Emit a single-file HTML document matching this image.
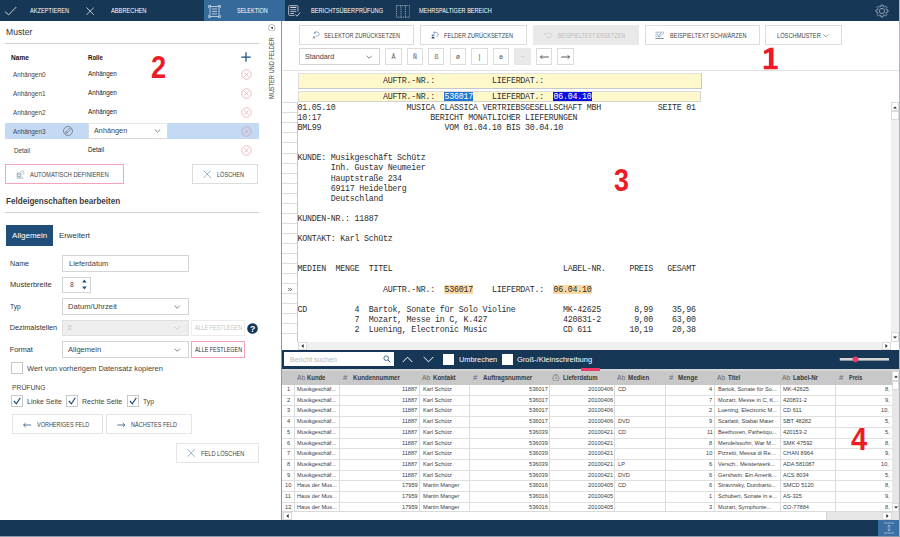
<!DOCTYPE html>
<html><head><meta charset="utf-8">
<style>
*{box-sizing:border-box;margin:0;padding:0}
html,body{width:900px;height:537px;overflow:hidden;background:#fff}
body{font-family:"Liberation Sans",sans-serif;position:relative;color:#222}
.a{position:absolute}
.t{position:absolute;white-space:nowrap;line-height:1}
#topbar{left:0;top:0;width:900px;height:21px;background:#163755}
#seltab{left:204px;top:0;width:81px;height:21px;background:#356a9b}
.tb{color:#fff;font-size:6.2px;top:7.6px;letter-spacing:-0.1px}
#botbar{left:0;top:520px;width:900px;height:17px;background:#163755}
.btn{position:absolute;border:1px solid #dcdcdc;background:#fff}
.bt{color:#3a4a5c;font-size:6.2px;letter-spacing:-0.1px}
.lbl{font-size:7.2px;color:#333}
.inp{position:absolute;border:1px solid #d4d4d4;background:#fff}
.cb{position:absolute;width:12px;height:12px;border:1px solid #c8c8c8;background:#fff}
.mono{font-family:"Liberation Mono",monospace;font-size:8.3px;letter-spacing:-0.24px;white-space:pre;line-height:10.15px;color:#2e2e2e}
.rn{left:13.4px;font-size:6.4px;color:#444}
.rr{left:88.3px;font-size:6.4px;color:#222}
.del{fill:none;stroke:#df7f88;stroke-width:0.5}
.ck{fill:none;stroke:#1f4e79;stroke-width:1.2}
.sbb{background:#fff;border:1px solid #dadada}
.th{top:373.8px;font-size:6.4px;font-weight:bold;color:#333}
.td{font-size:5.9px;color:#333}
</style></head><body>
<!-- TOP BAR -->
<div class="a" id="topbar"></div>
<div class="a" id="seltab"></div>
<div id="top">
<div class="t" style="left:30.15px;top:7.00px;font-size:7.5px;color:#fff;transform:scaleX(0.750);transform-origin:0 0;">AKZEPTIEREN</div>
<div class="t" style="left:111.00px;top:7.00px;font-size:7.5px;color:#fff;transform:scaleX(0.760);transform-origin:0 0;">ABBRECHEN</div>
<div class="t" style="left:237.00px;top:7.00px;font-size:7.5px;color:#fff;transform:scaleX(0.731);transform-origin:0 0;">SELEKTION</div>
<div class="t" style="left:310.90px;top:7.00px;font-size:7.5px;color:#fff;transform:scaleX(0.752);transform-origin:0 0;">BERICHTSÜBERPRÜFUNG</div>
<div class="t" style="left:418.90px;top:7.00px;font-size:7.5px;color:#fff;transform:scaleX(0.739);transform-origin:0 0;">MEHRSPALTIGER BEREICH</div>
<svg class="a" style="left:4px;top:6px" width="14" height="10" viewBox="0 0 14 10"><path d="M1 5.7 L4.7 8.8 L12.3 1" fill="none" stroke="#fff" stroke-width="0.75"/></svg>
<svg class="a" style="left:85.8px;top:6.8px" width="8.4" height="8.4" viewBox="0 0 9 9"><path d="M0.5 0.5 L8.5 8.5 M8.5 0.5 L0.5 8.5" stroke="#fff" stroke-width="0.75"/></svg>
<svg class="a" style="left:207.5px;top:4.5px" width="13" height="13" viewBox="0 0 13 13"><g fill="none" stroke="#e4edf6" stroke-width="0.7"><path d="M0.6 3 V0.6 H3 M10 0.6 H12.4 V3 M12.4 10 V12.4 H10 M3 12.4 H0.6 V10"/><rect x="2" y="1.6" width="9" height="9.8"/><path d="M4 4 H9 M4 6.5 H9 M4 9 H9"/></g></svg>
<svg class="a" style="left:288.2px;top:4.5px" width="13" height="13" viewBox="0 0 13 13"><g fill="none" stroke="#dfe6ee" stroke-width="0.7"><path d="M6.5 10.4 H1.6 Q0.6 10.4 0.6 9.4 V1.6 Q0.6 0.6 1.6 0.6 H9 Q10 0.6 10 1.6 V6.5"/><path d="M2.3 2.4 H8.3" stroke-width="1.1"/><path d="M2.3 4.7 H8.3 M2.3 6.6 H8.3 M2.3 8.5 H6"/><path d="M7.3 9.5 L9 11.2 L12 7.6" stroke-width="0.8"/></g></svg>
<svg class="a" style="left:395.6px;top:4.5px" width="14.4" height="13" viewBox="0 0 14.4 13"><g fill="none" stroke="#e8edf3" stroke-width="0.7" stroke-dasharray="0.9 0.9"><rect x="0.6" y="0.6" width="13.2" height="11.6"/><path d="M5 0.6 V12.2 M9.4 0.6 V12.2"/></g></svg>
<svg class="a" style="left:874.9px;top:3.7px" width="14" height="14" viewBox="0 0 14 14"><g fill="none" stroke="#b9c6d4" stroke-width="0.7"><path d="M5.82 2.55 L5.97 0.99 L8.03 0.99 L8.18 2.55 L9.31 3.02 L10.52 2.02 L11.98 3.48 L10.98 4.69 L11.45 5.82 L13.01 5.97 L13.01 8.03 L11.45 8.18 L10.98 9.31 L11.98 10.52 L10.52 11.98 L9.31 10.98 L8.18 11.45 L8.03 13.01 L5.97 13.01 L5.82 11.45 L4.69 10.98 L3.48 11.98 L2.02 10.52 L3.02 9.31 L2.55 8.18 L0.99 8.03 L0.99 5.97 L2.55 5.82 L3.02 4.69 L2.02 3.48 L3.48 2.02 L4.69 3.02 Z"/><circle cx="7" cy="7" r="2.6"/></g></svg>
</div>
<!-- LEFT PANEL placeholder -->
<div id="left">
<div class="t" style="left:5.90px;top:28.00px;font-size:9.2px;color:#333;transform:scaleX(0.936);transform-origin:0 0;">Muster</div>
<div class="a" style="left:5px;top:43px;width:253.5px;height:1px;background:#cfcfcf"></div>
<div class="t" style="left:10.90px;top:55.00px;font-size:6.7px;color:#111;font-weight:bold;transform:scaleX(0.980);transform-origin:0 0;">Name</div>
<div class="t" style="left:88.30px;top:55.00px;font-size:6.7px;color:#111;font-weight:bold;transform:scaleX(0.910);transform-origin:0 0;">Rolle</div>
<div class="a" style="left:5px;top:123px;width:253.5px;height:16px;background:#c4daf4"></div>
<div class="a" style="left:88.3px;top:123px;width:79.8px;height:16px;background:#fff;border:1px solid #d9d9d9;border-top-color:#e8e8e8"></div>
<div class="t" style="left:93.80px;top:127.00px;font-size:7.5px;color:#444;transform:scaleX(0.971);transform-origin:0 0;">Anhängen</div>
<svg class="a" style="left:154.4px;top:129.4px" width="7" height="4" viewBox="0 0 7 4"><path d="M0.8 0.6 L3.5 3.2 L6.2 0.6" fill="none" stroke="#555" stroke-width="0.7"/></svg>
<div class="t" style="left:13.40px;top:72.00px;font-size:6.7px;color:#444;transform:scaleX(0.948);transform-origin:0 0;">Anhängen0</div>
<div class="t" style="left:13.40px;top:91.00px;font-size:6.7px;color:#444;transform:scaleX(0.948);transform-origin:0 0;">Anhängen1</div>
<div class="t" style="left:13.40px;top:110.00px;font-size:6.7px;color:#444;transform:scaleX(0.948);transform-origin:0 0;">Anhängen2</div>
<div class="t" style="left:13.40px;top:129.00px;font-size:6.7px;color:#444;transform:scaleX(0.948);transform-origin:0 0;">Anhängen3</div>
<div class="t" style="left:13.70px;top:148.00px;font-size:6.7px;color:#444;transform:scaleX(0.941);transform-origin:0 0;">Detail</div>
<div class="t" style="left:88.30px;top:71.00px;font-size:6.7px;color:#1a1a1a;transform:scaleX(0.946);transform-origin:0 0;">Anhängen</div>
<div class="t" style="left:88.30px;top:90.00px;font-size:6.7px;color:#1a1a1a;transform:scaleX(0.946);transform-origin:0 0;">Anhängen</div>
<div class="t" style="left:88.30px;top:109.00px;font-size:6.7px;color:#1a1a1a;transform:scaleX(0.946);transform-origin:0 0;">Anhängen</div>
<div class="t" style="left:88.30px;top:147.00px;font-size:6.7px;color:#1a1a1a;transform:scaleX(0.946);transform-origin:0 0;">Detail</div>
<svg class="a" style="left:241.3px;top:52.1px" width="10" height="10" viewBox="0 0 10 10"><path d="M5 0.3 V9.7 M0.3 5 H9.7" stroke="#1f4e79" stroke-width="1.25" fill="none"/></svg>
<svg class="a del" style="left:240.5px;top:69.3px" width="11" height="11" viewBox="0 0 11 11"><circle cx="5.5" cy="5.5" r="4.75"/><path d="M3.3 3.3 L7.7 7.7 M7.7 3.3 L3.3 7.7"/></svg>
<svg class="a del" style="left:240.5px;top:88.1px" width="11" height="11" viewBox="0 0 11 11"><circle cx="5.5" cy="5.5" r="4.75"/><path d="M3.3 3.3 L7.7 7.7 M7.7 3.3 L3.3 7.7"/></svg>
<svg class="a del" style="left:240.5px;top:106.9px" width="11" height="11" viewBox="0 0 11 11"><circle cx="5.5" cy="5.5" r="4.75"/><path d="M3.3 3.3 L7.7 7.7 M7.7 3.3 L3.3 7.7"/></svg>
<svg class="a del" style="left:240.5px;top:125.8px" width="11" height="11" viewBox="0 0 11 11"><circle cx="5.5" cy="5.5" r="4.75"/><path d="M3.3 3.3 L7.7 7.7 M7.7 3.3 L3.3 7.7"/></svg>
<svg class="a del" style="left:240.5px;top:144.7px" width="11" height="11" viewBox="0 0 11 11"><circle cx="5.5" cy="5.5" r="4.75"/><path d="M3.3 3.3 L7.7 7.7 M7.7 3.3 L3.3 7.7"/></svg>
<svg class="a" style="left:63.2px;top:126.4px" width="10" height="10" viewBox="0 0 10 10"><circle cx="5" cy="5" r="4.5" fill="none" stroke="#555" stroke-width="0.6"/><path d="M2.6 7.4 L3.1 5.6 L6.6 2.1 L7.9 3.4 L4.4 6.9 Z M3.1 5.6 L4.4 6.9" fill="none" stroke="#555" stroke-width="0.55"/></svg>
<div class="t" style="left:150.50px;top:53.00px;font-size:30.9px;color:#ed1c24;font-weight:bold;transform:scaleX(0.880);transform-origin:0 0;">2</div>
<div class="btn" style="left:5px;top:164px;width:118.5px;height:20px;border-color:#f4a3b9"></div>
<div class="t" style="left:30.20px;top:171.00px;font-size:7.4px;color:#404448;transform:scaleX(0.787);transform-origin:0 0;">AUTOMATISCH DEFINIEREN</div>
<svg class="a" style="left:16px;top:170px" width="9" height="9" viewBox="0 0 9 9"><path d="M0.6 8 H7 M1.2 6.6 V3 H4.8 V6.6 Z M2 5.5 L3 4.2 L4 5.3" fill="none" stroke="#5b7a99" stroke-width="0.6"/><path d="M6.3 2.8 L8 0.6 M5.2 1.6 L5.8 0.5 M7 3.8 L8.3 3.3" stroke="#5b7a99" stroke-width="0.6"/></svg>
<div class="btn" style="left:192.2px;top:164px;width:66.3px;height:20px"></div>
<div class="t" style="left:217.00px;top:171.00px;font-size:7.4px;color:#404448;transform:scaleX(0.757);transform-origin:0 0;">LÖSCHEN</div>
<svg class="a" style="left:203px;top:170.3px" width="8.4" height="8.4" viewBox="0 0 9 9"><path d="M0.4 0.4 L8.6 8.6 M8.6 0.4 L0.4 8.6" stroke="#5b82ad" stroke-width="0.7"/></svg>
<div class="t" style="left:5.90px;top:197.00px;font-size:8.6px;color:#404040;font-weight:bold;transform:scaleX(0.942);transform-origin:0 0;">Feldeigenschaften bearbeiten</div>
<div class="a" style="left:5px;top:212px;width:253.5px;height:1px;background:#cfcfcf"></div>
<div class="a" style="left:6px;top:225px;width:47px;height:21px;background:#1f4e79"></div>
<div class="t" style="left:12.10px;top:232.00px;font-size:8px;color:#fff;">Allgemein</div>
<div class="t" style="left:58.60px;top:232.00px;font-size:8px;color:#333;transform:scaleX(0.982);transform-origin:0 0;">Erweitert</div>
<div class="t" style="left:9.70px;top:260.00px;font-size:7.3px;color:#333;transform:scaleX(0.980);transform-origin:0 0;">Name</div>
<div class="inp" style="left:62px;top:255px;width:126.5px;height:17px"></div>
<div class="t" style="left:68.70px;top:260.00px;font-size:7.3px;color:#444;transform:scaleX(1.020);transform-origin:0 0;">Lieferdatum</div>
<div class="t" style="left:9.70px;top:281.00px;font-size:7.3px;color:#333;transform:scaleX(1.027);transform-origin:0 0;">Musterbreite</div>
<div class="inp" style="left:62px;top:277px;width:28.5px;height:16px"></div>
<div class="t" style="left:70.00px;top:281.00px;font-size:7.3px;color:#444;transform:scaleX(0.913);transform-origin:0 0;">8</div>
<svg class="a" style="left:82px;top:279px" width="4.8" height="11" viewBox="0 0 5 11"><path d="M0.2 3.5 L2.5 0.3 L4.8 3.5 Z M0.2 7.6 L2.5 10.8 L4.8 7.6 Z" fill="#1f4e79"/></svg>
<div class="t" style="left:9.70px;top:303.00px;font-size:7.3px;color:#333;transform:scaleX(0.910);transform-origin:0 0;">Typ</div>
<div class="inp" style="left:62px;top:298px;width:126.5px;height:17px"></div>
<div class="t" style="left:67.80px;top:303.00px;font-size:7.3px;color:#444;transform:scaleX(1.050);transform-origin:0 0;">Datum/Uhrzeit</div>
<svg class="a" style="left:174.4px;top:304.6px" width="6.4" height="4" viewBox="0 0 6.4 4"><path d="M0.5 0.6 L3.2 3.3 L5.9 0.6" fill="none" stroke="#555" stroke-width="0.75"/></svg>
<div class="t" style="left:9.70px;top:324.00px;font-size:7.3px;color:#333;">Dezimalstellen</div>
<div class="inp" style="left:62px;top:320px;width:126.5px;height:16px;background:#eeeeee;border-color:#e0e0e0"></div>
<div class="t" style="left:68.30px;top:324.00px;font-size:7.3px;color:#b8b8b8;transform:scaleX(0.839);transform-origin:0 0;">0</div>
<svg class="a" style="left:174.4px;top:326.0px" width="6.4" height="4" viewBox="0 0 6.4 4"><path d="M0.5 0.6 L3.2 3.3 L5.9 0.6" fill="none" stroke="#c4c4c4" stroke-width="0.75"/></svg>
<div class="btn" style="left:191px;top:320px;width:54px;height:16px;border-color:#ececec"></div>
<div class="t" style="left:194.70px;top:324.00px;font-size:7px;color:#c4c4c4;transform:scaleX(0.776);transform-origin:0 0;">ALLE FESTLEGEN</div>
<svg class="a" style="left:246.7px;top:322.7px" width="11" height="11" viewBox="0 0 11 11"><circle cx="5.5" cy="5.5" r="5.3" fill="#17375a"/><text x="5.5" y="8.6" font-size="8.6" font-weight="bold" fill="#fff" text-anchor="middle" font-family="Liberation Sans">?</text></svg>
<div class="t" style="left:9.70px;top:346.00px;font-size:7.3px;color:#333;">Format</div>
<div class="inp" style="left:62px;top:341px;width:126.5px;height:17px"></div>
<div class="t" style="left:67.80px;top:346.00px;font-size:7.3px;color:#444;transform:scaleX(1.036);transform-origin:0 0;">Allgemein</div>
<svg class="a" style="left:174.4px;top:347.5px" width="6.4" height="4" viewBox="0 0 6.4 4"><path d="M0.5 0.6 L3.2 3.3 L5.9 0.6" fill="none" stroke="#555" stroke-width="0.75"/></svg>
<div class="btn" style="left:191px;top:341px;width:54px;height:17px;border-color:#f4a3b9"></div>
<div class="t" style="left:194.70px;top:346.00px;font-size:7px;color:#333;transform:scaleX(0.776);transform-origin:0 0;">ALLE FESTLEGEN</div>
<div class="cb" style="left:11px;top:362px"></div>
<div class="t" style="left:27.10px;top:365.00px;font-size:7.3px;color:#444;transform:scaleX(1.026);transform-origin:0 0;">Wert von vorherigem Datensatz kopieren</div>
<div class="t" style="left:11.70px;top:384.00px;font-size:7px;color:#444;transform:scaleX(0.968);transform-origin:0 0;">PRÜFUNG</div>
<div class="cb" style="left:11px;top:395px"></div>
<svg class="a ck" style="left:12.8px;top:397.4px" width="8" height="7.5" viewBox="0 0 8 7.5"><path d="M0.9 4 L3.4 6.8 L7.3 0.7"/></svg>
<div class="cb" style="left:66px;top:395px"></div>
<svg class="a ck" style="left:67.8px;top:397.4px" width="8" height="7.5" viewBox="0 0 8 7.5"><path d="M0.9 4 L3.4 6.8 L7.3 0.7"/></svg>
<div class="cb" style="left:127px;top:395px"></div>
<svg class="a ck" style="left:128.8px;top:397.4px" width="8" height="7.5" viewBox="0 0 8 7.5"><path d="M0.9 4 L3.4 6.8 L7.3 0.7"/></svg>
<div class="t" style="left:27.10px;top:398.00px;font-size:7.3px;color:#444;transform:scaleX(0.966);transform-origin:0 0;">Linke Seite</div>
<div class="t" style="left:81.60px;top:398.00px;font-size:7.3px;color:#444;transform:scaleX(0.964);transform-origin:0 0;">Rechte Seite</div>
<div class="t" style="left:143.40px;top:398.00px;font-size:7.3px;color:#444;transform:scaleX(0.927);transform-origin:0 0;">Typ</div>
<div class="btn" style="left:11.7px;top:414px;width:91.7px;height:20px;border-color:#e4e4e4"></div>
<div class="t" style="left:36.90px;top:421.00px;font-size:7.4px;color:#404448;transform:scaleX(0.743);transform-origin:0 0;">VORHERIGES FELD</div>
<svg class="a" style="left:22.8px;top:421.5px" width="8.5" height="6" viewBox="0 0 8.5 6"><path d="M0.6 3 H8.2 M2.7 1 L0.6 3 L2.7 5" fill="none" stroke="#1f4e79" stroke-width="0.75"/></svg>
<div class="btn" style="left:106px;top:414px;width:85.5px;height:20px;border-color:#e4e4e4"></div>
<div class="t" style="left:131.00px;top:421.00px;font-size:7.4px;color:#404448;transform:scaleX(0.754);transform-origin:0 0;">NÄCHSTES FELD</div>
<svg class="a" style="left:117.1px;top:421.5px" width="8.5" height="6" viewBox="0 0 8.5 6"><path d="M0.3 3 H7.9 M5.8 1 L7.9 3 L5.8 5" fill="none" stroke="#1f4e79" stroke-width="0.75"/></svg>
<div class="btn" style="left:176.1px;top:443px;width:82.5px;height:20px;border-color:#e4e4e4"></div>
<div class="t" style="left:200.70px;top:450.00px;font-size:7.4px;color:#404448;transform:scaleX(0.766);transform-origin:0 0;">FELD LÖSCHEN</div>
<svg class="a" style="left:187.3px;top:449px" width="8.4" height="8.2" viewBox="0 0 9 9"><path d="M0.4 0.4 L8.6 8.6 M8.6 0.4 L0.4 8.6" stroke="#5b82ad" stroke-width="0.7"/></svg>
<div class="a" style="left:281px;top:21px;width:1px;height:499px;background:#f2668c"></div>
<div class="t" style="left:269.06px;top:99.00px;font-size:6.9px;color:#444;transform-origin:0 0;transform:rotate(-90deg) scaleX(0.822)">MUSTER UND FELDER</div>
<svg class="a" style="left:268px;top:23.5px" width="7.6" height="7.6" viewBox="0 0 7.6 7.6"><circle cx="3.8" cy="3.8" r="3.3" fill="none" stroke="#777" stroke-width="0.5"/><path d="M4.8 2.4 L2.6 3.8 L4.8 5.2 Z" fill="#333"/></svg>
</div>
<!-- RIGHT -->
<div id="right">
<div class="btn" style="left:299.3px;top:25px;width:115.2px;height:20.0px;"></div>
<div class="t" style="left:324.00px;top:32.00px;font-size:7.4px;color:#404448;transform:scaleX(0.750);transform-origin:0 0;">SELEKTOR ZURÜCKSETZEN</div>
<div class="btn" style="left:420.4px;top:25px;width:107.0px;height:20.0px;"></div>
<div class="t" style="left:444.40px;top:32.00px;font-size:7.4px;color:#404448;transform:scaleX(0.756);transform-origin:0 0;">FELDER ZURÜCKSETZEN</div>
<div class="btn" style="left:533px;top:25px;width:106.2px;height:20.0px;background:#e9e9e9;border-color:#e9e9e9;"></div>
<div class="t" style="left:558.00px;top:32.00px;font-size:7.4px;color:#bcbcbc;transform:scaleX(0.726);transform-origin:0 0;">BEISPIELTEXT ERSETZEN</div>
<div class="btn" style="left:644.7px;top:25px;width:115.0px;height:20.0px;"></div>
<div class="t" style="left:669.60px;top:32.00px;font-size:7.4px;color:#404448;transform:scaleX(0.759);transform-origin:0 0;">BEISPIELTEXT SCHWÄRZEN</div>
<div class="btn" style="left:765.3px;top:25px;width:77.2px;height:20.0px;"></div>
<div class="t" style="left:777.00px;top:32.00px;font-size:7.4px;color:#404448;transform:scaleX(0.772);transform-origin:0 0;">LÖSCHMUSTER</div>
<svg class="a" style="left:823.4px;top:33.6px" width="5.6" height="3.6" viewBox="0 0 5.6 3.6"><path d="M0.5 0.5 L2.8 2.8 L5.1 0.5" fill="none" stroke="#555" stroke-width="0.6"/></svg>
<svg class="a" style="left:311.5px;top:31px" width="8" height="8.4" viewBox="0 0 8 8.4"><g fill="none" stroke="#4f79a8" stroke-width="0.6"><path d="M2.2 1.8 Q4 0.3 6.2 1.2 Q8 2.3 7 4 Q6 5.5 3.8 5.3"/><path d="M3.6 0.6 L2 1.9 L3.8 2.9"/><path d="M1 5.2 L3 7.6 M3 5.2 L1 7.6" stroke="#2b3f55" stroke-width="0.55"/></g></svg>
<svg class="a" style="left:431.3px;top:30.8px" width="8" height="8.2" viewBox="0 0 8 8.2"><g fill="none" stroke="#4f79a8" stroke-width="0.6"><path d="M2.8 1.6 H5.4 Q7.4 1.9 7.3 3.6 Q7.2 5.3 5.2 5.5"/><path d="M3.9 0.4 L2.6 1.6 L3.9 2.8"/></g><rect x="0.7" y="3.6" width="2.6" height="1.5" fill="#4f79a8"/><rect x="0.7" y="5.9" width="2.6" height="1.6" fill="#2b3f55"/></svg>
<svg class="a" style="left:543.6px;top:31.5px" width="8.4" height="7" viewBox="0 0 8.4 7"><g fill="none" stroke="#c6c6c6" stroke-width="0.6"><path d="M3.2 1.5 Q5.5 0.2 7 2 Q8 4 6.5 5.3 Q5 6.3 3.6 5.4"/><path d="M0.5 1 L2 2.6 M2 1 L0.5 2.6"/><path d="M3.4 4 L3.4 5.8 L5 5.6"/></g></svg>
<svg class="a" style="left:655.3px;top:30.6px" width="9.2" height="8.4" viewBox="0 0 9.2 8.4"><g fill="none" stroke="#4f79a8" stroke-width="0.6"><path d="M0.4 1.2 H5.6 M0.4 3.3 H3.4 M0.4 5.4 H2.4"/><path d="M3.5 5.9 L4 4.2 L7.6 0.6 L8.8 1.8 L5.2 5.4 Z"/></g><path d="M0.4 7.8 H8.8" stroke="#2b3f55" stroke-width="0.8"/></svg>
<div class="inp" style="left:299.3px;top:48px;width:80.4px;height:17px"></div>
<div class="t" style="left:304.80px;top:53.00px;font-size:7.5px;color:#444;transform:scaleX(0.962);transform-origin:0 0;">Standard</div>
<svg class="a" style="left:366px;top:54.8px" width="6.4" height="4" viewBox="0 0 6.4 4"><path d="M0.5 0.6 L3.2 3.3 L5.9 0.6" fill="none" stroke="#555" stroke-width="0.75"/></svg>
<div class="btn" style="left:385.3px;top:48px;width:16.4px;height:17.0px;"></div>
<div class="t" style="left:388.50px;width:10px;text-align:center;top:55px;font-family:'Liberation Mono',monospace;font-size:6.6px;color:#555">Ā</div>
<div class="btn" style="left:407px;top:48px;width:16.0px;height:17.0px;"></div>
<div class="t" style="left:410.00px;width:10px;text-align:center;top:55px;font-family:'Liberation Mono',monospace;font-size:6.6px;color:#555">Ñ</div>
<div class="btn" style="left:428.4px;top:48px;width:16.0px;height:17.0px;"></div>
<div class="t" style="left:431.40px;width:10px;text-align:center;top:55px;font-family:'Liberation Mono',monospace;font-size:6.6px;color:#555">ß</div>
<div class="btn" style="left:450.2px;top:48px;width:15.7px;height:17.0px;"></div>
<div class="t" style="left:453.05px;width:10px;text-align:center;top:55px;font-family:'Liberation Mono',monospace;font-size:6.6px;color:#555">ø</div>
<div class="btn" style="left:471.2px;top:48px;width:16.4px;height:17.0px;"></div>
<div class="t" style="left:474.40px;width:10px;text-align:center;top:55px;font-family:'Liberation Mono',monospace;font-size:6.6px;color:#555">|</div>
<div class="btn" style="left:492.9px;top:48px;width:16.0px;height:17.0px;"></div>
<div class="t" style="left:495.90px;width:10px;text-align:center;top:55px;font-family:'Liberation Mono',monospace;font-size:6.6px;color:#555">ɵ</div>
<div class="btn" style="left:514.2px;top:48px;width:16.6px;height:17.0px;background:#e9e9e9;border-color:#e6e6e6;"></div>
<div class="t" style="left:517.50px;width:10px;text-align:center;top:55px;font-family:'Liberation Mono',monospace;font-size:6.6px;color:#c8c8c8">¬</div>
<div class="btn" style="left:536.2px;top:48px;width:15.8px;height:17.0px;"></div>
<div class="btn" style="left:557.2px;top:48px;width:16.5px;height:17.0px;"></div>
<svg class="a" style="left:539.5px;top:53.5px" width="9" height="6" viewBox="0 0 9 6"><path d="M0.4 3 H8.8 M2.3 1.2 L0.5 3 L2.3 4.8" fill="none" stroke="#333" stroke-width="0.8"/></svg>
<svg class="a" style="left:561px;top:53.5px" width="9" height="6" viewBox="0 0 9 6"><path d="M0.2 3 H8.6 M6.7 1.2 L8.5 3 L6.7 4.8" fill="none" stroke="#333" stroke-width="0.8"/></svg>
<svg class="a" style="left:763px;top:47px" width="16" height="23" viewBox="0 0 16 23"><path d="M6.9 0.8 L10.5 0.8 L10.5 18.7 L14.7 18.7 L14.7 22.3 L0.7 22.3 L0.7 18.7 L5.9 18.7 L5.9 5.2 L1.4 7.3 L0.7 4.1 Z" fill="#ed1c24"/></svg>
<div class="a" style="left:282px;top:70px;width:618px;height:1px;background:#e2e2e2"></div>
<div class="a" style="left:298px;top:73px;width:403.6px;height:15.6px;background:#fef8cb;border:1px solid #c6c6ce;border-left-color:#dcdcdc;border-top-color:#e2e2e2"></div>
<div class="a" style="left:298px;top:91px;width:402.8px;height:11px;background:#fef8cb;border:1px solid #d2d2d2;border-top-color:#dedede;border-left-color:#dcdcdc"></div>
<div class="t mono" style="left:382.92px;top:76px;">AUFTR.-NR.:</div>
<div class="t mono" style="left:491.94px;top:76px;">LIEFERDAT.:</div>
<div class="a" style="left:444.34px;top:92.20px;width:28.84px;height:9.3px;background:#1e78d2"></div>
<div class="a" style="left:553.36px;top:92.20px;width:38.32px;height:9.3px;background:#0a10e0"></div>
<div class="t mono" style="left:382.92px;top:92px;">AUFTR.-NR.:</div>
<div class="t mono" style="left:444.54px;top:92px;color:#fff">536017</div>
<div class="t mono" style="left:491.94px;top:92px;">LIEFERDAT.:</div>
<div class="t mono" style="left:553.56px;top:92px;color:#fff">06.04.10</div>
<div class="a" style="left:297px;top:102px;width:1px;height:240px;background:#c8c8c8"></div>
<div class="a" style="left:282px;top:102.30px;width:15px;height:1px;background:#dcdcdc"></div>
<div class="a" style="left:282px;top:112.34px;width:15px;height:1px;background:#dcdcdc"></div>
<div class="a" style="left:282px;top:122.38px;width:15px;height:1px;background:#dcdcdc"></div>
<div class="a" style="left:282px;top:132.42px;width:15px;height:1px;background:#dcdcdc"></div>
<div class="a" style="left:282px;top:142.46px;width:15px;height:1px;background:#dcdcdc"></div>
<div class="a" style="left:282px;top:152.50px;width:15px;height:1px;background:#dcdcdc"></div>
<div class="a" style="left:282px;top:162.54px;width:15px;height:1px;background:#dcdcdc"></div>
<div class="a" style="left:282px;top:172.58px;width:15px;height:1px;background:#dcdcdc"></div>
<div class="a" style="left:282px;top:182.62px;width:15px;height:1px;background:#dcdcdc"></div>
<div class="a" style="left:282px;top:192.66px;width:15px;height:1px;background:#dcdcdc"></div>
<div class="a" style="left:282px;top:202.70px;width:15px;height:1px;background:#dcdcdc"></div>
<div class="a" style="left:282px;top:212.74px;width:15px;height:1px;background:#dcdcdc"></div>
<div class="a" style="left:282px;top:222.78px;width:15px;height:1px;background:#dcdcdc"></div>
<div class="a" style="left:282px;top:232.82px;width:15px;height:1px;background:#dcdcdc"></div>
<div class="a" style="left:282px;top:242.86px;width:15px;height:1px;background:#dcdcdc"></div>
<div class="a" style="left:282px;top:252.90px;width:15px;height:1px;background:#dcdcdc"></div>
<div class="a" style="left:282px;top:262.94px;width:15px;height:1px;background:#dcdcdc"></div>
<div class="a" style="left:282px;top:272.98px;width:15px;height:1px;background:#dcdcdc"></div>
<div class="a" style="left:282px;top:283.02px;width:15px;height:1px;background:#dcdcdc"></div>
<div class="a" style="left:282px;top:293.06px;width:15px;height:1px;background:#dcdcdc"></div>
<div class="a" style="left:282px;top:303.10px;width:15px;height:1px;background:#dcdcdc"></div>
<div class="a" style="left:282px;top:313.14px;width:15px;height:1px;background:#dcdcdc"></div>
<div class="a" style="left:282px;top:323.18px;width:15px;height:1px;background:#dcdcdc"></div>
<div class="a" style="left:282px;top:333.22px;width:15px;height:1px;background:#dcdcdc"></div>
<div class="a" style="left:444.34px;top:284.50px;width:28.84px;height:9.8px;background:#fbd9a5"></div>
<div class="a" style="left:553.36px;top:284.50px;width:38.32px;height:9.8px;background:#fbd9a5"></div>
<div class="t mono" style="left:297.60px;top:103px;">01.05.10</div>
<div class="t mono" style="left:406.62px;top:103px;">MUSICA CLASSICA VERTRIEBSGESELLSCHAFT MBH</div>
<div class="t mono" style="left:657.84px;top:103px;">SEITE 01</div>
<div class="t mono" style="left:297.60px;top:113px;">10:17</div>
<div class="t mono" style="left:430.32px;top:113px;">BERICHT MONATLICHER LIEFERUNGEN</div>
<div class="t mono" style="left:297.60px;top:123px;">BML99</div>
<div class="t mono" style="left:444.54px;top:123px;">VOM 01.04.10 BIS 30.04.10</div>
<div class="t mono" style="left:297.60px;top:153px;">KUNDE: Musikgeschäft Schütz</div>
<div class="t mono" style="left:330.78px;top:163px;">Inh. Gustav Neumeier</div>
<div class="t mono" style="left:330.78px;top:174px;">Hauptstraße 234</div>
<div class="t mono" style="left:330.78px;top:184px;">69117 Heidelberg</div>
<div class="t mono" style="left:330.78px;top:194px;">Deutschland</div>
<div class="t mono" style="left:297.60px;top:214px;">KUNDEN-NR.: 11887</div>
<div class="t mono" style="left:297.60px;top:234px;">KONTAKT: Karl Schütz</div>
<div class="t mono" style="left:297.60px;top:264px;">MEDIEN</div>
<div class="t mono" style="left:335.52px;top:264px;">MENGE</div>
<div class="t mono" style="left:368.70px;top:264px;">TITEL</div>
<div class="t mono" style="left:563.04px;top:264px;">LABEL-NR.</div>
<div class="t mono" style="left:629.40px;top:264px;">PREIS</div>
<div class="t mono" style="left:667.32px;top:264px;">GESAMT</div>
<div class="t mono" style="left:382.92px;top:285px;">AUFTR.-NR.:</div>
<div class="t mono" style="left:444.54px;top:285px;">536017</div>
<div class="t mono" style="left:491.94px;top:285px;">LIEFERDAT.:</div>
<div class="t mono" style="left:553.56px;top:285px;">06.04.10</div>
<div class="t mono" style="left:297.60px;top:305px;">CD</div>
<div class="t mono" style="left:354.48px;top:305px;">4</div>
<div class="t mono" style="left:368.70px;top:305px;">Bartok, Sonate für Solo Violine</div>
<div class="t mono" style="left:563.04px;top:305px;">MK-42625</div>
<div class="t mono" style="left:634.14px;top:305px;">8,99</div>
<div class="t mono" style="left:672.06px;top:305px;">35,96</div>
<div class="t mono" style="left:354.48px;top:315px;">7</div>
<div class="t mono" style="left:368.70px;top:315px;">Mozart, Messe in C, K.427</div>
<div class="t mono" style="left:563.04px;top:315px;">420831-2</div>
<div class="t mono" style="left:634.14px;top:315px;">9,00</div>
<div class="t mono" style="left:672.06px;top:315px;">63,00</div>
<div class="t mono" style="left:354.48px;top:325px;">2</div>
<div class="t mono" style="left:368.70px;top:325px;">Luening, Electronic Music</div>
<div class="t mono" style="left:563.04px;top:325px;">CD 611</div>
<div class="t mono" style="left:629.40px;top:325px;">10,19</div>
<div class="t mono" style="left:672.06px;top:325px;">20,38</div>
<svg class="a" style="left:287.5px;top:287.60px" width="4.4" height="3" viewBox="0 0 4.4 3"><path d="M0.4 0.2 L1.7 1.5 L0.4 2.8 M2.5 0.2 L3.8 1.5 L2.5 2.8" fill="none" stroke="#222" stroke-width="0.8"/></svg>
<div class="t" style="left:613.80px;top:165.00px;font-size:31px;color:#ed1c24;font-weight:bold;transform:scaleX(0.866);transform-origin:0 0;">3</div>
<div class="a" style="left:891.2px;top:102.4px;width:8.3px;height:239px;background:#f0f0f0"></div>
<div class="a sbb" style="left:891.2px;top:102.4px;width:8.3px;height:8.8px"></div>
<div class="a sbb" style="left:891.2px;top:111.2px;width:8.3px;height:8.5px"></div>
<div class="a sbb" style="left:891.2px;top:332px;width:8.3px;height:9.5px"></div>
<svg class="a" style="left:893.3px;top:105.5px" width="4" height="3" viewBox="0 0 4 3"><path d="M0 2.6 L2 0.4 L4 2.6 Z" fill="#222"/></svg>
<svg class="a" style="left:893.3px;top:335.5px" width="4" height="3" viewBox="0 0 4 3"><path d="M0 0.4 L2 2.6 L4 0.4 Z" fill="#222"/></svg>
<div class="a" style="left:298px;top:341.5px;width:593px;height:8.5px;background:#f0f0f0"></div>
<div class="a sbb" style="left:298px;top:341.5px;width:9px;height:8.5px"></div>
<div class="a sbb" style="left:881.8px;top:341.5px;width:9.4px;height:8.5px"></div>
<svg class="a" style="left:301px;top:343.8px" width="3" height="4" viewBox="0 0 3 4"><path d="M2.6 0 L0.4 2 L2.6 4 Z" fill="#222"/></svg>
<svg class="a" style="left:885.3px;top:343.8px" width="3" height="4" viewBox="0 0 3 4"><path d="M0.4 0 L2.6 2 L0.4 4 Z" fill="#222"/></svg>
<div class="a" style="left:282px;top:350px;width:618px;height:19px;background:#163755"></div>
<div class="a" style="left:284.4px;top:352.4px;width:109.6px;height:13.2px;background:#fff"></div>
<div class="t" style="left:289.60px;top:356.00px;font-size:7.6px;color:#b8b8b8;transform:scaleX(0.935);transform-origin:0 0;">Bericht suchen</div>
<svg class="a" style="left:382.5px;top:355.2px" width="8" height="8" viewBox="0 0 8 8"><circle cx="3.2" cy="3.2" r="2.3" fill="none" stroke="#1f4e79" stroke-width="0.8"/><path d="M4.9 4.9 L7.3 7.3" stroke="#1f4e79" stroke-width="0.9"/></svg>
<svg class="a" style="left:401.5px;top:355.5px" width="11" height="7" viewBox="0 0 11 7"><path d="M0.7 6 L5.5 1.2 L10.3 6" fill="none" stroke="#fff" stroke-width="1"/></svg>
<svg class="a" style="left:422.5px;top:355.8px" width="11" height="7" viewBox="0 0 11 7"><path d="M0.7 1 L5.5 5.8 L10.3 1" fill="none" stroke="#fff" stroke-width="1"/></svg>
<div class="a" style="left:443.3px;top:354.1px;width:10.7px;height:10.5px;background:#fff"></div>
<div class="t" style="left:458.50px;top:356.00px;font-size:7.7px;color:#fff;transform:scaleX(0.962);transform-origin:0 0;">Umbrechen</div>
<div class="a" style="left:502px;top:354.1px;width:10.7px;height:10.5px;background:#fff"></div>
<div class="t" style="left:517.10px;top:356.00px;font-size:7.7px;color:#fff;transform:scaleX(0.977);transform-origin:0 0;">Groß-/Kleinschreibung</div>
<svg class="a" style="left:839px;top:355px" width="52" height="9" viewBox="0 0 52 9"><rect x="0.8" y="3.0" width="49.2" height="2.6" fill="#d6d6d6"/><circle cx="16.5" cy="4.3" r="2.9" fill="#f2386b"/></svg>
<div class="a" style="left:282px;top:368.6px;width:618px;height:16px;background:#c8c8c8"></div>
<div class="a" style="left:282px;top:368.6px;width:618px;height:2.4px;background:#d6d6d6"></div>
<div class="a" style="left:581.3px;top:368.4px;width:18.7px;height:2.6px;background:#f2386b"></div>
<div class="t" style="left:296.50px;top:374.00px;font-size:7.8px;color:#6a6a6a;transform:scaleX(0.848);transform-origin:0 0;">Ab</div>
<div class="t" style="left:307.20px;top:375.00px;font-size:6.5px;color:#3a3a3a;font-weight:bold;transform:scaleX(0.910);transform-origin:0 0;">Kunde</div>
<div class="t" style="left:343.10px;top:374.00px;font-size:7.6px;color:#6a6a6a;transform:scaleX(1.019);transform-origin:0 0;">#</div>
<div class="t" style="left:352.50px;top:375.00px;font-size:6.5px;color:#3a3a3a;font-weight:bold;transform:scaleX(0.941);transform-origin:0 0;">Kundennummer</div>
<div class="t" style="left:421.50px;top:374.00px;font-size:7.8px;color:#6a6a6a;transform:scaleX(0.848);transform-origin:0 0;">Ab</div>
<div class="t" style="left:432.50px;top:375.00px;font-size:6.5px;color:#3a3a3a;font-weight:bold;transform:scaleX(0.935);transform-origin:0 0;">Kontakt</div>
<div class="t" style="left:473.10px;top:374.00px;font-size:7.6px;color:#6a6a6a;transform:scaleX(1.019);transform-origin:0 0;">#</div>
<div class="t" style="left:482.60px;top:375.00px;font-size:6.5px;color:#3a3a3a;font-weight:bold;transform:scaleX(0.940);transform-origin:0 0;">Auftragsnummer</div>
<svg class="a" style="left:552.2px;top:373.9px" width="7.6" height="7.6" viewBox="0 0 7.6 7.6"><circle cx="3.8" cy="4.1" r="3.1" fill="none" stroke="#6a6a6a" stroke-width="0.55"/><path d="M2.6 0.5 H5 M3.8 2.6 V4.3 H5" fill="none" stroke="#6a6a6a" stroke-width="0.55"/></svg>
<div class="t" style="left:562.90px;top:375.00px;font-size:6.5px;color:#3a3a3a;font-weight:bold;transform:scaleX(0.932);transform-origin:0 0;">Lieferdatum</div>
<div class="t" style="left:616.50px;top:374.00px;font-size:7.8px;color:#6a6a6a;transform:scaleX(0.848);transform-origin:0 0;">Ab</div>
<div class="t" style="left:628.00px;top:375.00px;font-size:6.5px;color:#3a3a3a;font-weight:bold;transform:scaleX(0.947);transform-origin:0 0;">Medien</div>
<div class="t" style="left:668.50px;top:374.00px;font-size:7.6px;color:#6a6a6a;transform:scaleX(1.019);transform-origin:0 0;">#</div>
<div class="t" style="left:678.20px;top:375.00px;font-size:6.5px;color:#3a3a3a;font-weight:bold;transform:scaleX(0.953);transform-origin:0 0;">Menge</div>
<div class="t" style="left:716.70px;top:374.00px;font-size:7.8px;color:#6a6a6a;transform:scaleX(0.848);transform-origin:0 0;">Ab</div>
<div class="t" style="left:727.70px;top:375.00px;font-size:6.5px;color:#3a3a3a;font-weight:bold;transform:scaleX(0.928);transform-origin:0 0;">Titel</div>
<div class="t" style="left:781.80px;top:374.00px;font-size:7.8px;color:#6a6a6a;transform:scaleX(0.848);transform-origin:0 0;">Ab</div>
<div class="t" style="left:793.00px;top:375.00px;font-size:6.5px;color:#3a3a3a;font-weight:bold;transform:scaleX(0.948);transform-origin:0 0;">Label-Nr</div>
<div class="t" style="left:839.20px;top:374.00px;font-size:7.6px;color:#6a6a6a;transform:scaleX(1.019);transform-origin:0 0;">#</div>
<div class="t" style="left:848.50px;top:375.00px;font-size:6.5px;color:#3a3a3a;font-weight:bold;transform:scaleX(0.837);transform-origin:0 0;">Preis</div>
<div class="a" style="left:282px;top:395px;width:609.5px;height:1px;background:#e0e0e0"></div>
<div class="t" style="left:286.64px;top:387.00px;font-size:5.9px;color:#3c3c3c;transform:scaleX(0.955);transform-origin:0 0;">1</div>
<div class="t" style="left:297.10px;top:387.00px;font-size:5.9px;color:#3c3c3c;transform:scaleX(0.955);transform-origin:0 0;">Musikgeschäf...</div>
<div class="t" style="left:402.16px;top:387.00px;font-size:5.9px;color:#3c3c3c;transform:scaleX(0.955);transform-origin:0 0;">11887</div>
<div class="t" style="left:422.70px;top:387.00px;font-size:5.9px;color:#3c3c3c;transform:scaleX(0.955);transform-origin:0 0;">Karl Schütz</div>
<div class="t" style="left:528.81px;top:387.00px;font-size:5.9px;color:#3c3c3c;transform:scaleX(0.955);transform-origin:0 0;">536017</div>
<div class="t" style="left:587.63px;top:387.00px;font-size:5.9px;color:#3c3c3c;transform:scaleX(0.955);transform-origin:0 0;">20100406</div>
<div class="t" style="left:618.00px;top:387.00px;font-size:5.9px;color:#3c3c3c;transform:scaleX(0.955);transform-origin:0 0;">CD</div>
<div class="t" style="left:709.37px;top:387.00px;font-size:5.9px;color:#3c3c3c;transform:scaleX(0.955);transform-origin:0 0;">4</div>
<div class="t" style="left:717.80px;top:387.00px;font-size:5.9px;color:#3c3c3c;transform:scaleX(0.955);transform-origin:0 0;">Bartok, Sonate für So...</div>
<div class="t" style="left:783.10px;top:387.00px;font-size:5.9px;color:#3c3c3c;transform:scaleX(0.955);transform-origin:0 0;">MK-42625</div>
<div class="t" style="left:884.60px;top:387.00px;font-size:5.9px;color:#3c3c3c;transform:scaleX(0.955);transform-origin:0 0;">8,</div>
<div class="a" style="left:282px;top:405px;width:609.5px;height:1px;background:#e0e0e0"></div>
<div class="t" style="left:286.64px;top:398.00px;font-size:5.9px;color:#3c3c3c;transform:scaleX(0.955);transform-origin:0 0;">2</div>
<div class="t" style="left:297.10px;top:398.00px;font-size:5.9px;color:#3c3c3c;transform:scaleX(0.955);transform-origin:0 0;">Musikgeschäf...</div>
<div class="t" style="left:402.16px;top:398.00px;font-size:5.9px;color:#3c3c3c;transform:scaleX(0.955);transform-origin:0 0;">11887</div>
<div class="t" style="left:422.70px;top:398.00px;font-size:5.9px;color:#3c3c3c;transform:scaleX(0.955);transform-origin:0 0;">Karl Schütz</div>
<div class="t" style="left:528.81px;top:398.00px;font-size:5.9px;color:#3c3c3c;transform:scaleX(0.955);transform-origin:0 0;">536017</div>
<div class="t" style="left:587.63px;top:398.00px;font-size:5.9px;color:#3c3c3c;transform:scaleX(0.955);transform-origin:0 0;">20100406</div>
<div class="t" style="left:709.37px;top:398.00px;font-size:5.9px;color:#3c3c3c;transform:scaleX(0.955);transform-origin:0 0;">7</div>
<div class="t" style="left:717.80px;top:398.00px;font-size:5.9px;color:#3c3c3c;transform:scaleX(0.955);transform-origin:0 0;">Mozart, Messe in C, K...</div>
<div class="t" style="left:783.10px;top:398.00px;font-size:5.9px;color:#3c3c3c;transform:scaleX(0.955);transform-origin:0 0;">420831-2</div>
<div class="t" style="left:884.60px;top:398.00px;font-size:5.9px;color:#3c3c3c;transform:scaleX(0.955);transform-origin:0 0;">9,</div>
<div class="a" style="left:282px;top:416px;width:609.5px;height:1px;background:#e0e0e0"></div>
<div class="t" style="left:286.64px;top:408.00px;font-size:5.9px;color:#3c3c3c;transform:scaleX(0.955);transform-origin:0 0;">3</div>
<div class="t" style="left:297.10px;top:408.00px;font-size:5.9px;color:#3c3c3c;transform:scaleX(0.955);transform-origin:0 0;">Musikgeschäf...</div>
<div class="t" style="left:402.16px;top:408.00px;font-size:5.9px;color:#3c3c3c;transform:scaleX(0.955);transform-origin:0 0;">11887</div>
<div class="t" style="left:422.70px;top:408.00px;font-size:5.9px;color:#3c3c3c;transform:scaleX(0.955);transform-origin:0 0;">Karl Schütz</div>
<div class="t" style="left:528.81px;top:408.00px;font-size:5.9px;color:#3c3c3c;transform:scaleX(0.955);transform-origin:0 0;">536017</div>
<div class="t" style="left:587.63px;top:408.00px;font-size:5.9px;color:#3c3c3c;transform:scaleX(0.955);transform-origin:0 0;">20100406</div>
<div class="t" style="left:709.37px;top:408.00px;font-size:5.9px;color:#3c3c3c;transform:scaleX(0.955);transform-origin:0 0;">2</div>
<div class="t" style="left:717.80px;top:408.00px;font-size:5.9px;color:#3c3c3c;transform:scaleX(0.955);transform-origin:0 0;">Luening, Electronic M...</div>
<div class="t" style="left:783.10px;top:408.00px;font-size:5.9px;color:#3c3c3c;transform:scaleX(0.955);transform-origin:0 0;">CD 611</div>
<div class="t" style="left:881.47px;top:408.00px;font-size:5.9px;color:#3c3c3c;transform:scaleX(0.955);transform-origin:0 0;">10,</div>
<div class="a" style="left:282px;top:427px;width:609.5px;height:1px;background:#e0e0e0"></div>
<div class="t" style="left:286.64px;top:419.00px;font-size:5.9px;color:#3c3c3c;transform:scaleX(0.955);transform-origin:0 0;">4</div>
<div class="t" style="left:297.10px;top:419.00px;font-size:5.9px;color:#3c3c3c;transform:scaleX(0.955);transform-origin:0 0;">Musikgeschäf...</div>
<div class="t" style="left:402.16px;top:419.00px;font-size:5.9px;color:#3c3c3c;transform:scaleX(0.955);transform-origin:0 0;">11887</div>
<div class="t" style="left:422.70px;top:419.00px;font-size:5.9px;color:#3c3c3c;transform:scaleX(0.955);transform-origin:0 0;">Karl Schütz</div>
<div class="t" style="left:528.81px;top:419.00px;font-size:5.9px;color:#3c3c3c;transform:scaleX(0.955);transform-origin:0 0;">536017</div>
<div class="t" style="left:587.63px;top:419.00px;font-size:5.9px;color:#3c3c3c;transform:scaleX(0.955);transform-origin:0 0;">20100406</div>
<div class="t" style="left:618.00px;top:419.00px;font-size:5.9px;color:#3c3c3c;transform:scaleX(0.955);transform-origin:0 0;">DVD</div>
<div class="t" style="left:709.37px;top:419.00px;font-size:5.9px;color:#3c3c3c;transform:scaleX(0.955);transform-origin:0 0;">9</div>
<div class="t" style="left:717.80px;top:419.00px;font-size:5.9px;color:#3c3c3c;transform:scaleX(0.955);transform-origin:0 0;">Scarlatti, Stabat Mater</div>
<div class="t" style="left:783.10px;top:419.00px;font-size:5.9px;color:#3c3c3c;transform:scaleX(0.955);transform-origin:0 0;">SBT 48282</div>
<div class="t" style="left:884.60px;top:419.00px;font-size:5.9px;color:#3c3c3c;transform:scaleX(0.955);transform-origin:0 0;">5,</div>
<div class="a" style="left:282px;top:438px;width:609.5px;height:1px;background:#e0e0e0"></div>
<div class="t" style="left:286.64px;top:430.00px;font-size:5.9px;color:#3c3c3c;transform:scaleX(0.955);transform-origin:0 0;">5</div>
<div class="t" style="left:297.10px;top:430.00px;font-size:5.9px;color:#3c3c3c;transform:scaleX(0.955);transform-origin:0 0;">Musikgeschäf...</div>
<div class="t" style="left:402.16px;top:430.00px;font-size:5.9px;color:#3c3c3c;transform:scaleX(0.955);transform-origin:0 0;">11887</div>
<div class="t" style="left:422.70px;top:430.00px;font-size:5.9px;color:#3c3c3c;transform:scaleX(0.955);transform-origin:0 0;">Karl Schütz</div>
<div class="t" style="left:528.81px;top:430.00px;font-size:5.9px;color:#3c3c3c;transform:scaleX(0.955);transform-origin:0 0;">536039</div>
<div class="t" style="left:587.63px;top:430.00px;font-size:5.9px;color:#3c3c3c;transform:scaleX(0.955);transform-origin:0 0;">20100421</div>
<div class="t" style="left:618.00px;top:430.00px;font-size:5.9px;color:#3c3c3c;transform:scaleX(0.955);transform-origin:0 0;">CD</div>
<div class="t" style="left:706.64px;top:430.00px;font-size:5.9px;color:#3c3c3c;transform:scaleX(0.955);transform-origin:0 0;">11</div>
<div class="t" style="left:717.80px;top:430.00px;font-size:5.9px;color:#3c3c3c;transform:scaleX(0.955);transform-origin:0 0;">Beethoven, Pathetiqu...</div>
<div class="t" style="left:783.10px;top:430.00px;font-size:5.9px;color:#3c3c3c;transform:scaleX(0.955);transform-origin:0 0;">420153-2</div>
<div class="t" style="left:884.60px;top:430.00px;font-size:5.9px;color:#3c3c3c;transform:scaleX(0.955);transform-origin:0 0;">5,</div>
<div class="a" style="left:282px;top:448px;width:609.5px;height:1px;background:#e0e0e0"></div>
<div class="t" style="left:286.64px;top:441.00px;font-size:5.9px;color:#3c3c3c;transform:scaleX(0.955);transform-origin:0 0;">6</div>
<div class="t" style="left:297.10px;top:441.00px;font-size:5.9px;color:#3c3c3c;transform:scaleX(0.955);transform-origin:0 0;">Musikgeschäf...</div>
<div class="t" style="left:402.16px;top:441.00px;font-size:5.9px;color:#3c3c3c;transform:scaleX(0.955);transform-origin:0 0;">11887</div>
<div class="t" style="left:422.70px;top:441.00px;font-size:5.9px;color:#3c3c3c;transform:scaleX(0.955);transform-origin:0 0;">Karl Schütz</div>
<div class="t" style="left:528.81px;top:441.00px;font-size:5.9px;color:#3c3c3c;transform:scaleX(0.955);transform-origin:0 0;">536039</div>
<div class="t" style="left:587.63px;top:441.00px;font-size:5.9px;color:#3c3c3c;transform:scaleX(0.955);transform-origin:0 0;">20100421</div>
<div class="t" style="left:709.37px;top:441.00px;font-size:5.9px;color:#3c3c3c;transform:scaleX(0.955);transform-origin:0 0;">8</div>
<div class="t" style="left:717.80px;top:441.00px;font-size:5.9px;color:#3c3c3c;transform:scaleX(0.955);transform-origin:0 0;">Mendelssohn, War M...</div>
<div class="t" style="left:783.10px;top:441.00px;font-size:5.9px;color:#3c3c3c;transform:scaleX(0.955);transform-origin:0 0;">SMK 47592</div>
<div class="t" style="left:884.60px;top:441.00px;font-size:5.9px;color:#3c3c3c;transform:scaleX(0.955);transform-origin:0 0;">8,</div>
<div class="a" style="left:282px;top:459px;width:609.5px;height:1px;background:#e0e0e0"></div>
<div class="t" style="left:286.64px;top:451.00px;font-size:5.9px;color:#3c3c3c;transform:scaleX(0.955);transform-origin:0 0;">7</div>
<div class="t" style="left:297.10px;top:451.00px;font-size:5.9px;color:#3c3c3c;transform:scaleX(0.955);transform-origin:0 0;">Musikgeschäf...</div>
<div class="t" style="left:402.16px;top:451.00px;font-size:5.9px;color:#3c3c3c;transform:scaleX(0.955);transform-origin:0 0;">11887</div>
<div class="t" style="left:422.70px;top:451.00px;font-size:5.9px;color:#3c3c3c;transform:scaleX(0.955);transform-origin:0 0;">Karl Schütz</div>
<div class="t" style="left:528.81px;top:451.00px;font-size:5.9px;color:#3c3c3c;transform:scaleX(0.955);transform-origin:0 0;">536039</div>
<div class="t" style="left:587.63px;top:451.00px;font-size:5.9px;color:#3c3c3c;transform:scaleX(0.955);transform-origin:0 0;">20100421</div>
<div class="t" style="left:706.25px;top:451.00px;font-size:5.9px;color:#3c3c3c;transform:scaleX(0.955);transform-origin:0 0;">10</div>
<div class="t" style="left:717.80px;top:451.00px;font-size:5.9px;color:#3c3c3c;transform:scaleX(0.955);transform-origin:0 0;">Pizzetti, Messa di Re...</div>
<div class="t" style="left:783.10px;top:451.00px;font-size:5.9px;color:#3c3c3c;transform:scaleX(0.955);transform-origin:0 0;">CHAN 8964</div>
<div class="t" style="left:884.60px;top:451.00px;font-size:5.9px;color:#3c3c3c;transform:scaleX(0.955);transform-origin:0 0;">9,</div>
<div class="a" style="left:282px;top:470px;width:609.5px;height:1px;background:#e0e0e0"></div>
<div class="t" style="left:286.64px;top:462.00px;font-size:5.9px;color:#3c3c3c;transform:scaleX(0.955);transform-origin:0 0;">8</div>
<div class="t" style="left:297.10px;top:462.00px;font-size:5.9px;color:#3c3c3c;transform:scaleX(0.955);transform-origin:0 0;">Musikgeschäf...</div>
<div class="t" style="left:402.16px;top:462.00px;font-size:5.9px;color:#3c3c3c;transform:scaleX(0.955);transform-origin:0 0;">11887</div>
<div class="t" style="left:422.70px;top:462.00px;font-size:5.9px;color:#3c3c3c;transform:scaleX(0.955);transform-origin:0 0;">Karl Schütz</div>
<div class="t" style="left:528.81px;top:462.00px;font-size:5.9px;color:#3c3c3c;transform:scaleX(0.955);transform-origin:0 0;">536039</div>
<div class="t" style="left:587.63px;top:462.00px;font-size:5.9px;color:#3c3c3c;transform:scaleX(0.955);transform-origin:0 0;">20100421</div>
<div class="t" style="left:618.00px;top:462.00px;font-size:5.9px;color:#3c3c3c;transform:scaleX(0.955);transform-origin:0 0;">LP</div>
<div class="t" style="left:709.37px;top:462.00px;font-size:5.9px;color:#3c3c3c;transform:scaleX(0.955);transform-origin:0 0;">6</div>
<div class="t" style="left:717.80px;top:462.00px;font-size:5.9px;color:#3c3c3c;transform:scaleX(0.955);transform-origin:0 0;">Versch., Meisterwerk...</div>
<div class="t" style="left:783.10px;top:462.00px;font-size:5.9px;color:#3c3c3c;transform:scaleX(0.955);transform-origin:0 0;">ADA 581087</div>
<div class="t" style="left:881.47px;top:462.00px;font-size:5.9px;color:#3c3c3c;transform:scaleX(0.955);transform-origin:0 0;">10,</div>
<div class="a" style="left:282px;top:480px;width:609.5px;height:1px;background:#e0e0e0"></div>
<div class="t" style="left:286.64px;top:473.00px;font-size:5.9px;color:#3c3c3c;transform:scaleX(0.955);transform-origin:0 0;">9</div>
<div class="t" style="left:297.10px;top:473.00px;font-size:5.9px;color:#3c3c3c;transform:scaleX(0.955);transform-origin:0 0;">Musikgeschäf...</div>
<div class="t" style="left:402.16px;top:473.00px;font-size:5.9px;color:#3c3c3c;transform:scaleX(0.955);transform-origin:0 0;">11887</div>
<div class="t" style="left:422.70px;top:473.00px;font-size:5.9px;color:#3c3c3c;transform:scaleX(0.955);transform-origin:0 0;">Karl Schütz</div>
<div class="t" style="left:528.81px;top:473.00px;font-size:5.9px;color:#3c3c3c;transform:scaleX(0.955);transform-origin:0 0;">536039</div>
<div class="t" style="left:587.63px;top:473.00px;font-size:5.9px;color:#3c3c3c;transform:scaleX(0.955);transform-origin:0 0;">20100421</div>
<div class="t" style="left:618.00px;top:473.00px;font-size:5.9px;color:#3c3c3c;transform:scaleX(0.955);transform-origin:0 0;">DVD</div>
<div class="t" style="left:709.37px;top:473.00px;font-size:5.9px;color:#3c3c3c;transform:scaleX(0.955);transform-origin:0 0;">6</div>
<div class="t" style="left:717.80px;top:473.00px;font-size:5.9px;color:#3c3c3c;transform:scaleX(0.955);transform-origin:0 0;">Gershwin, Ein Amerik...</div>
<div class="t" style="left:783.10px;top:473.00px;font-size:5.9px;color:#3c3c3c;transform:scaleX(0.955);transform-origin:0 0;">ACS 8034</div>
<div class="t" style="left:884.60px;top:473.00px;font-size:5.9px;color:#3c3c3c;transform:scaleX(0.955);transform-origin:0 0;">5,</div>
<div class="a" style="left:282px;top:491px;width:609.5px;height:1px;background:#e0e0e0"></div>
<div class="t" style="left:285.07px;top:483.00px;font-size:5.9px;color:#3c3c3c;transform:scaleX(0.955);transform-origin:0 0;">10</div>
<div class="t" style="left:297.10px;top:483.00px;font-size:5.9px;color:#3c3c3c;transform:scaleX(0.955);transform-origin:0 0;">Haus der Mus...</div>
<div class="t" style="left:401.74px;top:483.00px;font-size:5.9px;color:#3c3c3c;transform:scaleX(0.955);transform-origin:0 0;">17959</div>
<div class="t" style="left:422.70px;top:483.00px;font-size:5.9px;color:#3c3c3c;transform:scaleX(0.955);transform-origin:0 0;">Martin Manger</div>
<div class="t" style="left:528.81px;top:483.00px;font-size:5.9px;color:#3c3c3c;transform:scaleX(0.955);transform-origin:0 0;">536016</div>
<div class="t" style="left:587.63px;top:483.00px;font-size:5.9px;color:#3c3c3c;transform:scaleX(0.955);transform-origin:0 0;">20100405</div>
<div class="t" style="left:618.00px;top:483.00px;font-size:5.9px;color:#3c3c3c;transform:scaleX(0.955);transform-origin:0 0;">CD</div>
<div class="t" style="left:709.37px;top:483.00px;font-size:5.9px;color:#3c3c3c;transform:scaleX(0.955);transform-origin:0 0;">6</div>
<div class="t" style="left:717.80px;top:483.00px;font-size:5.9px;color:#3c3c3c;transform:scaleX(0.955);transform-origin:0 0;">Stravinsky, Dumbarto...</div>
<div class="t" style="left:783.10px;top:483.00px;font-size:5.9px;color:#3c3c3c;transform:scaleX(0.955);transform-origin:0 0;">SMCD 5120</div>
<div class="t" style="left:884.60px;top:483.00px;font-size:5.9px;color:#3c3c3c;transform:scaleX(0.955);transform-origin:0 0;">8,</div>
<div class="a" style="left:282px;top:502px;width:609.5px;height:1px;background:#e0e0e0"></div>
<div class="t" style="left:285.27px;top:494.00px;font-size:5.9px;color:#3c3c3c;transform:scaleX(0.955);transform-origin:0 0;">11</div>
<div class="t" style="left:297.10px;top:494.00px;font-size:5.9px;color:#3c3c3c;transform:scaleX(0.955);transform-origin:0 0;">Haus der Mus...</div>
<div class="t" style="left:401.74px;top:494.00px;font-size:5.9px;color:#3c3c3c;transform:scaleX(0.955);transform-origin:0 0;">17959</div>
<div class="t" style="left:422.70px;top:494.00px;font-size:5.9px;color:#3c3c3c;transform:scaleX(0.955);transform-origin:0 0;">Martin Manger</div>
<div class="t" style="left:528.81px;top:494.00px;font-size:5.9px;color:#3c3c3c;transform:scaleX(0.955);transform-origin:0 0;">536016</div>
<div class="t" style="left:587.63px;top:494.00px;font-size:5.9px;color:#3c3c3c;transform:scaleX(0.955);transform-origin:0 0;">20100405</div>
<div class="t" style="left:709.37px;top:494.00px;font-size:5.9px;color:#3c3c3c;transform:scaleX(0.955);transform-origin:0 0;">1</div>
<div class="t" style="left:717.80px;top:494.00px;font-size:5.9px;color:#3c3c3c;transform:scaleX(0.955);transform-origin:0 0;">Schubert, Sonate in e...</div>
<div class="t" style="left:783.10px;top:494.00px;font-size:5.9px;color:#3c3c3c;transform:scaleX(0.955);transform-origin:0 0;">AS-325</div>
<div class="t" style="left:884.60px;top:494.00px;font-size:5.9px;color:#3c3c3c;transform:scaleX(0.955);transform-origin:0 0;">9,</div>
<div class="a" style="left:282px;top:512px;width:609.5px;height:1px;background:#e0e0e0"></div>
<div class="t" style="left:285.07px;top:505.00px;font-size:5.9px;color:#3c3c3c;transform:scaleX(0.955);transform-origin:0 0;">12</div>
<div class="t" style="left:297.10px;top:505.00px;font-size:5.9px;color:#3c3c3c;transform:scaleX(0.955);transform-origin:0 0;">Haus der Mus...</div>
<div class="t" style="left:401.74px;top:505.00px;font-size:5.9px;color:#3c3c3c;transform:scaleX(0.955);transform-origin:0 0;">17959</div>
<div class="t" style="left:422.70px;top:505.00px;font-size:5.9px;color:#3c3c3c;transform:scaleX(0.955);transform-origin:0 0;">Martin Manger</div>
<div class="t" style="left:528.81px;top:505.00px;font-size:5.9px;color:#3c3c3c;transform:scaleX(0.955);transform-origin:0 0;">536016</div>
<div class="t" style="left:587.63px;top:505.00px;font-size:5.9px;color:#3c3c3c;transform:scaleX(0.955);transform-origin:0 0;">20100405</div>
<div class="t" style="left:709.37px;top:505.00px;font-size:5.9px;color:#3c3c3c;transform:scaleX(0.955);transform-origin:0 0;">3</div>
<div class="t" style="left:717.80px;top:505.00px;font-size:5.9px;color:#3c3c3c;transform:scaleX(0.955);transform-origin:0 0;">Mozart, Symphonie...</div>
<div class="t" style="left:783.10px;top:505.00px;font-size:5.9px;color:#3c3c3c;transform:scaleX(0.955);transform-origin:0 0;">CO-77884</div>
<div class="t" style="left:884.60px;top:505.00px;font-size:5.9px;color:#3c3c3c;transform:scaleX(0.955);transform-origin:0 0;">8,</div>
<div class="a" style="left:293.5px;top:384.5px;width:1px;height:127.5px;background:#dcdcdc"></div>
<div class="a" style="left:339.1px;top:384.5px;width:1px;height:127.5px;background:#dcdcdc"></div>
<div class="a" style="left:419.1px;top:384.5px;width:1px;height:127.5px;background:#dcdcdc"></div>
<div class="a" style="left:469.4px;top:384.5px;width:1px;height:127.5px;background:#dcdcdc"></div>
<div class="a" style="left:549.3px;top:384.5px;width:1px;height:127.5px;background:#dcdcdc"></div>
<div class="a" style="left:614.4px;top:384.5px;width:1px;height:127.5px;background:#dcdcdc"></div>
<div class="a" style="left:664.6px;top:384.5px;width:1px;height:127.5px;background:#dcdcdc"></div>
<div class="a" style="left:714.2px;top:384.5px;width:1px;height:127.5px;background:#dcdcdc"></div>
<div class="a" style="left:779.5px;top:384.5px;width:1px;height:127.5px;background:#dcdcdc"></div>
<div class="a" style="left:834.8px;top:384.5px;width:1px;height:127.5px;background:#dcdcdc"></div>
<div class="t" style="left:850.80px;top:425.00px;font-size:30.9px;color:#ed1c24;font-weight:bold;transform:scaleX(0.945);transform-origin:0 0;">4</div>
<div class="a" style="left:891.6px;top:371px;width:8.4px;height:141px;background:#e6e6e6"></div>
<div class="a sbb" style="left:891.6px;top:371.3px;width:7.9px;height:9.6px"></div>
<div class="a sbb" style="left:891.6px;top:380.9px;width:7.9px;height:9px"></div>
<div class="a sbb" style="left:891.6px;top:502.8px;width:7.9px;height:9.2px"></div>
<svg class="a" style="left:893.5px;top:374.8px" width="4" height="3" viewBox="0 0 4 3"><path d="M0 2.6 L2 0.4 L4 2.6 Z" fill="#222"/></svg>
<svg class="a" style="left:893.5px;top:506px" width="4" height="3" viewBox="0 0 4 3"><path d="M0 0.4 L2 2.6 L4 0.4 Z" fill="#222"/></svg>
<div class="a" style="left:282px;top:511px;width:618px;height:9px;background:#e6e6e6;border-top:1px solid #dadada"></div>
<div class="a sbb" style="left:283px;top:512px;width:8.5px;height:8px"></div>
<div class="a" style="left:291.5px;top:512.4px;width:535.8px;height:7.6px;background:#fff;border-right:1px solid #d4d4d4"></div>
<div class="a sbb" style="left:882px;top:512px;width:9.7px;height:8px"></div>
<svg class="a" style="left:285.7px;top:514px" width="3" height="4" viewBox="0 0 3 4"><path d="M2.6 0 L0.4 2 L2.6 4 Z" fill="#222"/></svg>
<svg class="a" style="left:885.5px;top:514px" width="3" height="4" viewBox="0 0 3 4"><path d="M0.4 0 L2.6 2 L0.4 4 Z" fill="#222"/></svg>
<div class="a" style="left:878.3px;top:520px;width:20.7px;height:17px;background:#3a6fa3;z-index:5"></div>
<svg class="a" style="left:882.5px;top:522px;z-index:6" width="12" height="12" viewBox="0 0 12 12"><g fill="none" stroke="#c9d8e8" stroke-width="0.6"><path d="M0.8 1 H11.2 M0.8 11 H11.2 M6 3 V9 M4.6 4.4 L6 3 L7.4 4.4 M4.6 7.6 L6 9 L7.4 7.6"/></g></svg>
<div class="a" style="left:899px;top:0;width:1px;height:537px;background:#aab6c8;z-index:7"></div>
<div class="a" style="left:0;top:536px;width:900px;height:1px;background:#8a9bb0;z-index:7"></div>
</div>
<div class="a" id="botbar"></div>
</body></html>
